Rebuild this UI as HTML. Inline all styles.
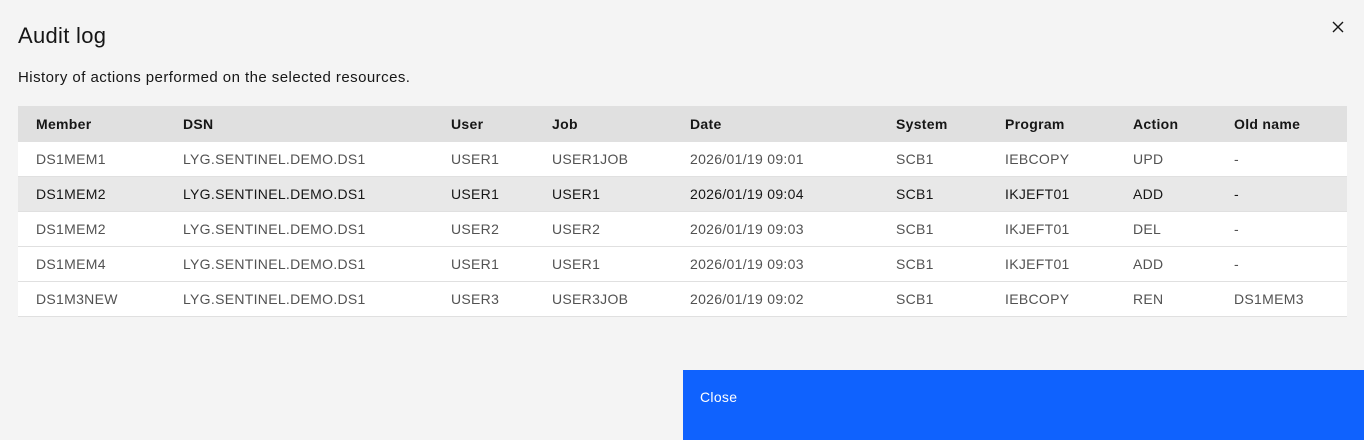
<!DOCTYPE html>
<html><head><style>
html,body{margin:0;width:1364px;height:440px;background:#f4f4f4;font-family:"Liberation Sans",sans-serif;overflow:hidden;position:relative}
h1{position:absolute;left:18px;top:23px;margin:0;font-weight:400;font-size:22px;letter-spacing:0.3px;color:#161616}
.x{position:absolute;left:1331px;top:20px}
p{position:absolute;left:18px;top:69px;margin:0;font-size:15px;letter-spacing:0.45px;color:#161616}
table{position:absolute;left:18px;top:106px;width:1329px;border-collapse:collapse;font-size:14px;letter-spacing:0.3px}
th{background:#e0e0e0;height:35px;text-align:left;font-weight:700;color:#161616;padding:0 0 0 18px}
td{background:#fff;height:34px;border-top:1px solid #e0e0e0;color:#525252;padding:0 0 0 18px}
tr.h td{background:#e8e8e8;color:#161616}
tr:last-child td{border-bottom:1px solid #e0e0e0}
.btn{position:absolute;left:683px;top:370px;width:681px;height:70px;background:#0f62fe;color:#fff;font-size:14px;letter-spacing:0.3px}
.btn span{position:absolute;left:17px;top:19px}
</style></head><body>
<h1>Audit log</h1>
<svg class="x" width="14" height="14" viewBox="0 0 14 14"><path d="M2 2L12 12M12 2L2 12" stroke="#161616" stroke-width="1.4"/></svg>
<p>History of actions performed on the selected resources.</p>
<table>
<colgroup><col style="width:147px"><col style="width:268px"><col style="width:101px"><col style="width:138px"><col style="width:206px"><col style="width:109px"><col style="width:128px"><col style="width:101px"><col></colgroup>
<tr><th>Member</th><th>DSN</th><th>User</th><th>Job</th><th>Date</th><th>System</th><th>Program</th><th>Action</th><th>Old name</th></tr>
<tr><td>DS1MEM1</td><td>LYG.SENTINEL.DEMO.DS1</td><td>USER1</td><td>USER1JOB</td><td>2026/01/19 09:01</td><td>SCB1</td><td>IEBCOPY</td><td>UPD</td><td>-</td></tr>
<tr class="h"><td>DS1MEM2</td><td>LYG.SENTINEL.DEMO.DS1</td><td>USER1</td><td>USER1</td><td>2026/01/19 09:04</td><td>SCB1</td><td>IKJEFT01</td><td>ADD</td><td>-</td></tr>
<tr><td>DS1MEM2</td><td>LYG.SENTINEL.DEMO.DS1</td><td>USER2</td><td>USER2</td><td>2026/01/19 09:03</td><td>SCB1</td><td>IKJEFT01</td><td>DEL</td><td>-</td></tr>
<tr><td>DS1MEM4</td><td>LYG.SENTINEL.DEMO.DS1</td><td>USER1</td><td>USER1</td><td>2026/01/19 09:03</td><td>SCB1</td><td>IKJEFT01</td><td>ADD</td><td>-</td></tr>
<tr><td>DS1M3NEW</td><td>LYG.SENTINEL.DEMO.DS1</td><td>USER3</td><td>USER3JOB</td><td>2026/01/19 09:02</td><td>SCB1</td><td>IEBCOPY</td><td>REN</td><td>DS1MEM3</td></tr>
</table>
<div class="btn"><span>Close</span></div>
</body></html>
